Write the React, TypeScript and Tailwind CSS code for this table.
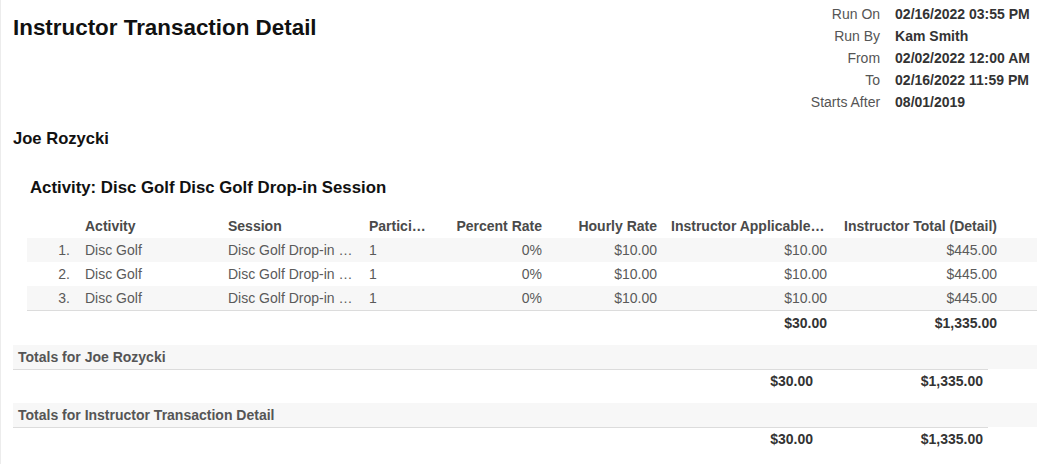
import React from "react";

interface MetaRow {
  label: string;
  value: string;
}

interface LineItem {
  id: number;
  activity: string;
  session: string;
  participants: string;
  percentRate: string;
  hourlyRate: string;
  applicable: string;
  total: string;
}

const meta: MetaRow[] = [
  { label: "Run On", value: "02/16/2022 03:55 PM" },
  { label: "Run By", value: "Kam Smith" },
  { label: "From", value: "02/02/2022 12:00 AM" },
  { label: "To", value: "02/16/2022 11:59 PM" },
  { label: "Starts After", value: "08/01/2019" },
];

const items: LineItem[] = [1, 2, 3].map((id) => ({
  id,
  activity: "Disc Golf",
  session: "Disc Golf Drop-in Session",
  participants: "1",
  percentRate: "0%",
  hourlyRate: "$10.00",
  applicable: "$10.00",
  total: "$445.00",
}));

// column template shared by the table and the totals sections
const cols =
  "grid grid-cols-[53px_143px_141px_73px_110px_119px_166px_170px_1fr]";

const TotalsBlock = ({ title }: { title: string }) => (
  <div className="mt-[10px] ml-[12px] w-[1024px]">
    <div className="h-[24px] bg-[#f7f7f7] pl-[5px] text-[14px] leading-[24px] font-bold text-[#555]">
      {title}
    </div>
    <div className={`${cols} w-[975px] border-t border-[#dcdcdc] h-[24px] items-center text-[14px] font-bold text-[#333]`}>
      <div className="col-span-6" />
      <div className="px-[5px] text-right">$30.00</div>
      <div className="px-[5px] text-right">$1,335.00</div>
    </div>
  </div>
);

const App = () => {
  return (
    <div className="w-[1060px] h-[464px] bg-white border-l border-[#ececec] font-['Liberation_Sans',Arial,sans-serif] overflow-hidden">
      <div className="flex items-start justify-between pl-[12px] pr-[30px]">
        <h1 className="pt-[15px] text-[22.4px] leading-[26px] font-bold text-[#111]">
          Instructor Transaction Detail
        </h1>
        <div className="pt-[3px] grid grid-cols-[auto_auto] gap-x-[15px] text-[14px] leading-[22px]">
          {meta.map((m) => (
            <React.Fragment key={m.label}>
              <div className="text-right text-[#555]">{m.label}</div>
              <div className="font-bold text-[#333]">{m.value}</div>
            </React.Fragment>
          ))}
        </div>
      </div>

      <div className="mt-[15px] pl-[12px] text-[16.6px] leading-[22px] font-bold text-[#111]">
        Joe Rozycki
      </div>

      <div className="mt-[27px] pl-[29px] text-[16.8px] leading-[22px] font-bold text-[#111]">
        Activity: Disc Golf Disc Golf Drop-in Session
      </div>

      <div className="mt-[15px] ml-[26px] w-[1010px] text-[14px]">
        <div className={`${cols} h-[24px] items-center font-bold text-[#4a4a4a]`}>
          <div />
          <div className="pl-[5px]">Activity</div>
          <div className="pl-[5px]">Session</div>
          <div className="px-[5px] truncate">Participants</div>
          <div className="pr-[5px] text-right">Percent Rate</div>
          <div className="pr-[9px] text-right">Hourly Rate</div>
          <div className="px-[5px] truncate text-right">Instructor Applicable Amount</div>
          <div className="px-[5px] text-right whitespace-nowrap">Instructor Total (Detail)</div>
          <div />
        </div>
        {items.map((item, i) => (
          <div
            key={item.id}
            className={`${cols} h-[24px] items-center text-[#5a5a5a] ${
              i % 2 === 0 ? "bg-[#f7f7f7]" : "bg-white"
            } ${i === items.length - 1 ? "h-[25px] border-b border-[#dcdcdc]" : ""}`}
          >
            <div className="pr-[10px] text-right">{item.id}.</div>
            <div className="pl-[5px]">{item.activity}</div>
            <div className="px-[5px] truncate">{item.session}</div>
            <div className="px-[5px]">{item.participants}</div>
            <div className="pr-[5px] text-right">{item.percentRate}</div>
            <div className="pr-[9px] text-right">{item.hourlyRate}</div>
            <div className="px-[5px] text-right">{item.applicable}</div>
            <div className="px-[5px] text-right">{item.total}</div>
            <div />
          </div>
        ))}
        <div className={`${cols} h-[24px] items-center font-bold text-[#333]`}>
          <div className="col-span-6" />
          <div className="px-[5px] text-right">$30.00</div>
          <div className="px-[5px] text-right">$1,335.00</div>
        </div>
      </div>

      <TotalsBlock title="Totals for Joe Rozycki" />
      <TotalsBlock title="Totals for Instructor Transaction Detail" />
    </div>
  );
};

export default App;
